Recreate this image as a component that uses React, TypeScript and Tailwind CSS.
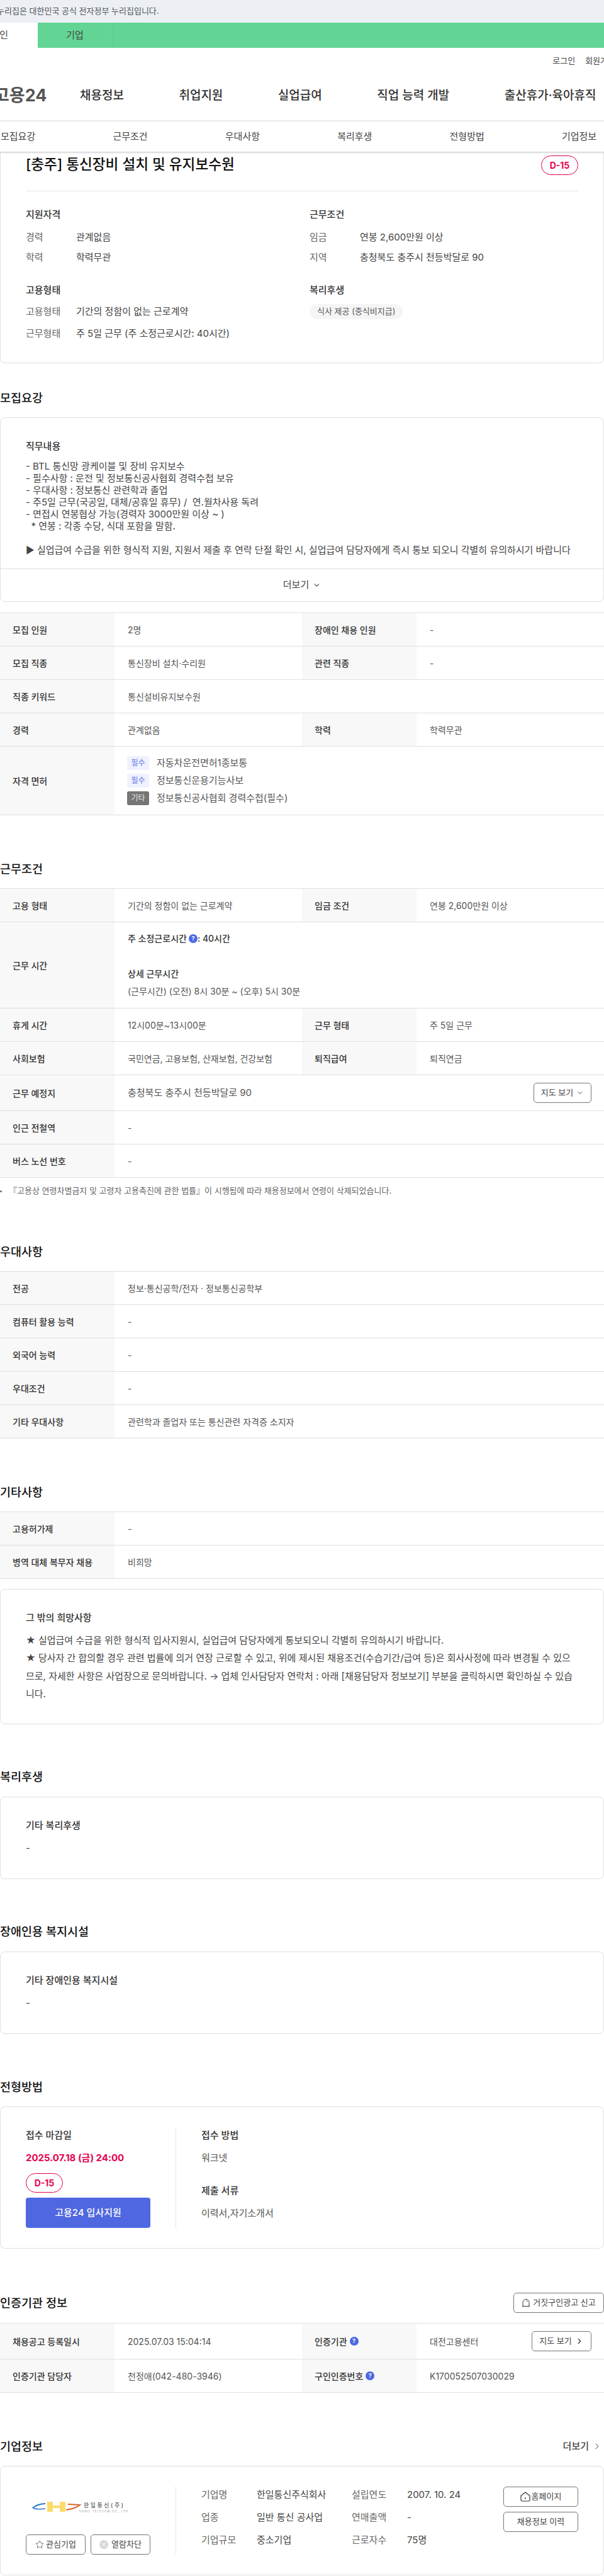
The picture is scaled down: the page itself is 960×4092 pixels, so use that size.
import { ChevronDown, ChevronRight, Star, X } from 'lucide-react';
import type { ReactNode } from 'react';

const mainNav = ['채용정보', '취업지원', '실업급여', '직업 능력 개발', '출산휴가·육아휴직'];
const subNav = ['모집요강', '근무조건', '우대사항', '복리후생', '전형방법', '기업정보'];

const jobLines = `- BTL 통신망 광케이블 및 장비 유지보수
- 필수사항 : 운전 및 정보통신공사협회 경력수첩 보유
- 우대사항 : 정보통신 관련학과 졸업
- 주5일 근무(국공일, 대체/공휴일 휴무) /  연.월차사용 독려
- 면접시 연봉협상 가능(경력자 3000만원 이상 ~ )
  * 연봉 : 각종 수당, 식대 포함을 말함.

▶ 실업급여 수급을 위한 형식적 지원, 지원서 제출 후 연락 단절 확인 시, 실업급여 담당자에게 즉시 통보 되오니 각별히 유의하시기 바랍니다`;

const extraLines = `★ 실업급여 수급을 위한 형식적 입사지원시, 실업급여 담당자에게 통보되오니 각별히 유의하시기 바랍니다.
★ 당사자 간 합의할 경우 관련 법률에 의거 연장 근로할 수 있고, 위에 제시된 채용조건(수습기간/급여 등)은 회사사정에 따라 변경될 수 있으
므로, 자세한 사항은 사업장으로 문의바랍니다. → 업체 인사담당자 연락처 : 아래 [채용담당자 정보보기] 부분을 클릭하시면 확인하실 수 있습
니다.`;

function Heading({ children, className = '' }: { children: ReactNode; className?: string }) {
  return <h2 className={`h-[28px] text-[18.5px] leading-[28px] font-medium text-[#111] ${className}`}>{children}</h2>;
}

function Cell({ label, children, className = '' }: { label: ReactNode; children: ReactNode; className?: string }) {
  return (
    <>
      <div className="flex items-center gap-1 bg-[#f8f8f8] pl-5 font-medium text-[#333]">{label}</div>
      <div className={`flex items-center pl-[21px] text-[#555] ${className}`}>{children}</div>
    </>
  );
}

function Row({ children, height = 'h-[53px]' }: { children: ReactNode; height?: string }) {
  return (
    <div className={`grid grid-cols-[182px_298px_182px_298px] border-b border-[#e0e0e0] text-[14px] ${height}`}>
      {children}
    </div>
  );
}

function WideRow({ label, children, height }: { label: ReactNode; children: ReactNode; height?: string }) {
  return (
    <Row height={height}>
      <Cell label={label} className="col-span-3">
        {children}
      </Cell>
    </Row>
  );
}

function Table({ children }: { children: ReactNode }) {
  return <div className="border-t border-[#e0e0e0]">{children}</div>;
}

function Card({ children, className = '' }: { children: ReactNode; className?: string }) {
  return <div className={`rounded-lg border border-[#e0e0e0] ${className}`}>{children}</div>;
}

function DBadge() {
  return (
    <span className="flex h-[31px] w-[59px] items-center justify-center rounded-full border border-[#e5004f] text-[14px] font-bold text-[#e5004f]">
      D-15
    </span>
  );
}

function Help() {
  return (
    <span className="inline-flex h-[14px] w-[14px] items-center justify-center rounded-full bg-[#4d68e1] text-[9px] font-bold text-white">
      ?
    </span>
  );
}

function Chip({ kind, children }: { kind: '필수' | '기타'; children: ReactNode }) {
  return (
    <div className="flex h-[22px] items-center gap-3 text-[15px]">
      <span
        className={`flex h-[22px] w-[35px] items-center justify-center rounded-[3px] text-[12px] ${
          kind === '필수' ? 'bg-[#eff2fe] text-[#5f78e6]' : 'bg-[#767676] text-[#e6e6e6]'
        }`}
      >
        {kind}
      </span>
      <span>{children}</span>
    </div>
  );
}

function OutlineButton({ children, className }: { children: ReactNode; className: string }) {
  return (
    <button
      type="button"
      className={`flex h-[32px] items-center justify-center rounded-[5px] border border-[#767676] text-[13px] text-[#444] ${className}`}
    >
      {children}
    </button>
  );
}

function HouseIcon() {
  return (
    <svg width="16" height="16" viewBox="0 0 16 16" fill="none" stroke="#333" strokeWidth="1.2">
      <path d="M1 6.5 8 1l7 5.500v7a1.500 1.500 0 0 1-1.500 1.500h-11A1.500 1.500 0 0 1 1 13.500Z" strokeLinejoin="round" />
      <path d="M8 9v3" />
    </svg>
  );
}

function ReportIcon() {
  return (
    <svg width="14" height="14" viewBox="0 0 14 14" fill="none" stroke="#333" strokeWidth="1">
      <path d="M2 12.500V6.500a5 5 0 0 1 10 0v6M1 12.500h12" />
      <path d="M8.500 3.500v2" />
    </svg>
  );
}

function Logo() {
  return (
    <svg width="190" height="24" viewBox="0 0 190 24" className="blur-[0.5px]">
      <path d="M2 14Q8 8 22 7" fill="none" stroke="#2a78c8" strokeWidth="2" />
      <path d="M2 14Q9 17 22 15" fill="none" stroke="#2a78c8" strokeWidth="1.500" />
      <path d="M25 4h9v6h11V4h9v16h-9v-6H34v6h-9Z" fill="#fbdc6b" />
      <path d="M55 17Q70 15 77 9L58 8" fill="none" stroke="#d9602c" strokeWidth="2" />
      <text x="83" y="13" fontSize="9" fontWeight="700" fill="#777" letterSpacing="2.500">
        한일통신(주)
      </text>
      <text x="76" y="21" fontSize="4.500" fill="#999" letterSpacing="1">
        HANIL TELECOM CO., LTD
      </text>
    </svg>
  );
}

function Info({ title, className = '' }: { title: string; className?: string }) {
  return <div className={`h-6 text-[15px] leading-6 font-medium text-[#333] ${className}`}>{title}</div>;
}

function InfoLine({ label, value, className }: { label: string; value: string; className: string }) {
  return (
    <div className={`flex h-6 items-center text-[15px] ${className}`}>
      <span className="w-[80px] text-[#666]">{label}</span>
      <span className="text-[#444]">{value}</span>
    </div>
  );
}

function TextCard({ title, children, className }: { title: string; children: ReactNode; className: string }) {
  return (
    <Card className={`px-10 pt-[33px] ${className}`}>
      <Info title={title} />
      {children}
    </Card>
  );
}

function CompanyField({ label, value }: { label: string; value: string }) {
  return (
    <>
      <span className="text-[#666]">{label}</span>
      <span className="text-[#444]">{value}</span>
    </>
  );
}

export default function App() {
  return (
    <div className="h-[4092px] w-[960px] overflow-hidden bg-white font-['Inter','Noto_Sans_CJK_KR',sans-serif] text-[#333]">
      <div className="flex h-9 items-center whitespace-nowrap bg-[#ecf0f5] text-[13px] text-[#555]">
        <span className="-ml-[5px]">누리집은 대한민국 공식 전자정부 누리집입니다.</span>
      </div>
      <div className="flex h-10 bg-[#62d595] text-[15px] text-[#444]">
        <div className="flex w-[60px] items-center overflow-hidden bg-white">
          <span className="-ml-[14.500px] whitespace-nowrap">개인</span>
        </div>
        <div className="flex w-[120px] items-center justify-center border-r border-[#5bc98b] pr-[1px]">기업</div>
      </div>
      <div className="flex h-10 items-center justify-end gap-4 overflow-hidden whitespace-nowrap pt-[1px] text-[13px] text-[#444]">
        <span>로그인</span>
        <span className="-mr-[18px]">회원가입</span>
      </div>

      <div className="flex h-[77px] items-center gap-[87.500px] border-b-2 border-[#f0f0f0] pb-[2px] text-[19px] font-medium whitespace-nowrap text-[#333]">
        <span className="-ml-[10px] w-[49.500px] text-[27px] font-bold text-[#555]">고용24</span>
        {mainNav.map(item => (
          <span key={item}>{item}</span>
        ))}
      </div>
      <div className="relative z-10 flex h-[48px] items-center gap-[123.200px] pl-[1px] text-[15px] text-[#444] shadow-[0_1px_3px_rgba(0,0,0,0.25)]">
        {subNav.map(item => (
          <span key={item}>{item}</span>
        ))}
      </div>

      {/* 공고 요약 */}
      <div className="h-[336px] rounded-b-lg border border-t-0 border-[#e0e0e0] px-10">
        <div className="flex items-start justify-between border-b border-[#e6e6e6] pb-[25px] pt-[6px]">
          <h1 className="h-[31px] text-[22.600px] leading-[28px] font-medium text-[#111]">
            [충주] 통신장비 설치 및 유지보수원
          </h1>
          <DBadge />
        </div>
        <div className="grid grid-cols-[451px_1fr] pt-[25px]">
          <div>
            <Info title="지원자격" />
            <InfoLine label="경력" value="관계없음" className="mt-3" />
            <InfoLine label="학력" value="학력무관" className="mt-2" />
            <Info title="고용형태" className="mt-7" />
            <InfoLine label="고용형태" value="기간의 정함이 없는 근로계약" className="mt-[10px]" />
            <InfoLine label="근무형태" value="주 5일 근무 (주 소정근로시간: 40시간)" className="mt-[11px]" />
          </div>
          <div>
            <Info title="근무조건" />
            <InfoLine label="임금" value="연봉 2,600만원 이상" className="mt-3" />
            <InfoLine label="지역" value="충청북도 충주시 천등박달로 90" className="mt-2" />
            <Info title="복리후생" className="mt-7" />
            <span className="mt-[10px] inline-flex h-6 items-center rounded-full bg-[#f5f5f5] px-3 text-[13px] text-[#555]">
              식사 제공 (중식비지급)
            </span>
          </div>
        </div>
      </div>

      {/* 모집요강 */}
      <Heading className="mt-[41px] mb-[17px]">모집요강</Heading>
      <Card>
        <div className="px-10 pt-[33px] pb-5">
          <Info title="직무내용" />
          <p className="mt-[10px] text-[15px] leading-[19px] whitespace-pre text-[#444]">{jobLines}</p>
        </div>
        <div className="flex h-[52px] items-center justify-center gap-[6px] border-t border-[#e0e0e0] text-[15px] text-[#444]">
          더보기 <ChevronDown size={13} strokeWidth={2} />
        </div>
      </Card>
      <div className="mt-[17px]">
        <Table>
          <Row>
            <Cell label="모집 인원">2명</Cell>
            <Cell label="장애인 채용 인원">-</Cell>
          </Row>
          <Row>
            <Cell label="모집 직종">통신장비 설치·수리원</Cell>
            <Cell label="관련 직종">-</Cell>
          </Row>
          <WideRow label="직종 키워드">통신설비유지보수원</WideRow>
          <Row>
            <Cell label="경력">관계없음</Cell>
            <Cell label="학력">학력무관</Cell>
          </Row>
          <WideRow label="자격 면허" height="h-[109px]">
            <div className="-ml-px flex flex-col gap-[6px]">
              <Chip kind="필수">자동차운전면허1종보통</Chip>
              <Chip kind="필수">정보통신운용기능사보</Chip>
              <Chip kind="기타">정보통신공사협회 경력수첩(필수)</Chip>
            </div>
          </WideRow>
        </Table>
      </div>

      {/* 근무조건 */}
      <Heading className="mt-[71px] mb-[17px]">근무조건</Heading>
      <Table>
        <Row>
          <Cell label="고용 형태">기간의 정함이 없는 근로계약</Cell>
          <Cell label="임금 조건">연봉 2,600만원 이상</Cell>
        </Row>
        <WideRow label="근무 시간" height="h-[137px]">
          <div className="leading-[28px]">
            <div className="flex items-center gap-[3px] font-medium text-[#333]">
              주 소정근로시간 <Help />
              <span className="-ml-[3px]">: 40시간</span>
            </div>
            <div className="mt-[28px] font-medium text-[#333]">상세 근무시간</div>
            <div>(근무시간) (오전) 8시 30분 ~ (오후) 5시 30분</div>
          </div>
        </WideRow>
        <Row>
          <Cell label="휴게 시간">12시00분~13시00분</Cell>
          <Cell label="근무 형태">주 5일 근무</Cell>
        </Row>
        <Row>
          <Cell label="사회보험">국민연금, 고용보험, 산재보험, 건강보험</Cell>
          <Cell label="퇴직급여">퇴직연금</Cell>
        </Row>
        <WideRow label="근무 예정지" height="h-[57px]">
          <div className="flex w-full items-center justify-between pr-5">
            <span className="text-[15px]">충청북도 충주시 천등박달로 90</span>
            <OutlineButton className="w-[92px] gap-[5px]">
              지도 보기 <ChevronDown size={12} />
            </OutlineButton>
          </div>
        </WideRow>
        <WideRow label="인근 전철역">-</WideRow>
        <WideRow label="버스 노선 번호">-</WideRow>
      </Table>
      <p className="mt-[11px] flex h-5 items-center text-[13px] whitespace-nowrap text-[#666]">
        <span className="mr-[11px] h-[3px] w-[3px] rounded-full bg-[#666]" />
        『고용상 연령차별금지 및 고령자 고용촉진에 관한 법률』이 시행됨에 따라 채용정보에서 연령이 삭제되었습니다.
      </p>

      {/* 우대사항 */}
      <Heading className="mt-[72px] mb-[17px]">우대사항</Heading>
      <Table>
        <WideRow label="전공">정보·통신공학/전자 · 정보통신공학부</WideRow>
        <WideRow label="컴퓨터 활용 능력">-</WideRow>
        <WideRow label="외국어 능력">-</WideRow>
        <WideRow label="우대조건">-</WideRow>
        <WideRow label="기타 우대사항">관련학과 졸업자 또는 통신관련 자격증 소지자</WideRow>
      </Table>

      {/* 기타사항 */}
      <Heading className="mt-[71px] mb-[17px]">기타사항</Heading>
      <Table>
        <WideRow label="고용허가제">-</WideRow>
        <WideRow label="병역 대체 복무자 채용">비희망</WideRow>
      </Table>
      <TextCard title="그 밖의 희망사항" className="mt-4 h-[215px]">
        <p className="mt-[10px] text-[15px] leading-[28.300px] whitespace-pre text-[#444]">{extraLines}</p>
      </TextCard>

      {/* 복리후생 */}
      <Heading className="mt-[69px] mb-[18px]">복리후생</Heading>
      <TextCard title="기타 복리후생" className="h-[131px]">
        <p className="mt-3 text-[15px] leading-6 text-[#444]">-</p>
      </TextCard>

      {/* 장애인용 복지시설 */}
      <Heading className="mt-[69px] mb-[18px]">장애인용 복지시설</Heading>
      <TextCard title="기타 장애인용 복지시설" className="h-[131px]">
        <p className="mt-3 text-[15px] leading-6 text-[#444]">-</p>
      </TextCard>

      {/* 전형방법 */}
      <Heading className="mt-[70px] mb-[17px]">전형방법</Heading>
      <Card className="flex h-[226px] px-10 pt-[33px]">
        <div className="h-[160px] w-[239px] border-r border-[#e6e6e6] pr-10">
          <Info title="접수 마감일" />
          <div className="mt-3 h-6 text-[15px] leading-6 font-bold text-[#e5004f]">2025.07.18 (금) 24:00</div>
          <div className="mt-3 flex">
            <DBadge />
          </div>
          <button
            type="button"
            className="mt-2 h-12 w-full rounded-[4px] bg-[#4f67e0] text-[15px] font-medium text-white"
          >
            고용24 입사지원
          </button>
        </div>
        <div className="pl-10">
          <Info title="접수 방법" />
          <p className="mt-3 h-6 text-[15px] leading-6 text-[#555]">워크넷</p>
          <Info title="제출 서류" className="mt-7" />
          <p className="mt-3 h-6 text-[15px] leading-6 text-[#555]">이력서,자기소개서</p>
        </div>
      </Card>

      {/* 인증기관 정보 */}
      <div className="mt-[70px] mb-4 flex h-8 items-center justify-between">
        <Heading>인증기관 정보</Heading>
        <OutlineButton className="w-[144px] gap-1">
          <ReportIcon /> 거짓구인광고 신고
        </OutlineButton>
      </div>
      <Table>
        <Row height="h-[57px]">
          <Cell label="채용공고 등록일시">2025.07.03 15:04:14</Cell>
          <Cell
            label={
              <>
                인증기관 <Help />
              </>
            }
          >
            <div className="flex w-full items-center justify-between pr-5">
              <span>대전고용센터</span>
              <OutlineButton className="w-[95px] gap-[5px]">
                지도 보기 <ChevronRight size={14} strokeWidth={2.500} />
              </OutlineButton>
            </div>
          </Cell>
        </Row>
        <Row>
          <Cell label="인증기관 담당자">천정애(042-480-3946)</Cell>
          <Cell
            label={
              <>
                구인인증번호 <Help />
              </>
            }
          >
            K170052507030029
          </Cell>
        </Row>
      </Table>

      {/* 기업정보 */}
      <div className="mt-[71px] mb-[17px] flex items-center justify-between">
        <Heading>기업정보</Heading>
        <div className="flex items-center gap-[5px] pr-[3px] text-[15px] font-medium text-[#444]">
          더보기 <ChevronRight size={16} strokeWidth={1.500} />
        </div>
      </div>
      <Card className="flex h-[174px] px-10 pt-8">
        <div className="flex h-[108px] w-[239px] flex-col justify-between border-r border-[#e6e6e6] pr-10">
          <div className="pl-[9px] pt-[20px]">
            <Logo />
          </div>
          <div className="flex justify-between">
            <OutlineButton className="w-[95px] gap-[3px]">
              <Star size={14} strokeWidth={1.300} /> 관심기업
            </OutlineButton>
            <OutlineButton className="w-[95px] gap-[5px]">
              <span className="flex h-[14px] w-[14px] items-center justify-center rounded-full bg-[#d8d8d8] text-white">
                <X size={10} strokeWidth={2.500} />
              </span>
              열람차단
            </OutlineButton>
          </div>
        </div>
        <div className="grid h-[108px] w-[479px] grid-cols-[88px_151px_88px_112px] content-start gap-y-3 pl-10 pt-[1px] text-[15px] leading-6">
          <CompanyField label="기업명" value="한일통신주식회사" />
          <CompanyField label="설립연도" value="2007. 10. 24" />
          <CompanyField label="업종" value="일반 통신 공사업" />
          <CompanyField label="연매출액" value="-" />
          <CompanyField label="기업규모" value="중소기업" />
          <CompanyField label="근로자수" value="75명" />
        </div>
        <div className="ml-auto flex w-[119px] flex-col gap-2">
          <OutlineButton className="w-[119px] gap-[2px]">
            <HouseIcon /> 홈페이지
          </OutlineButton>
          <OutlineButton className="w-[119px]">채용정보 이력</OutlineButton>
        </div>
      </Card>
    </div>
  );
}
